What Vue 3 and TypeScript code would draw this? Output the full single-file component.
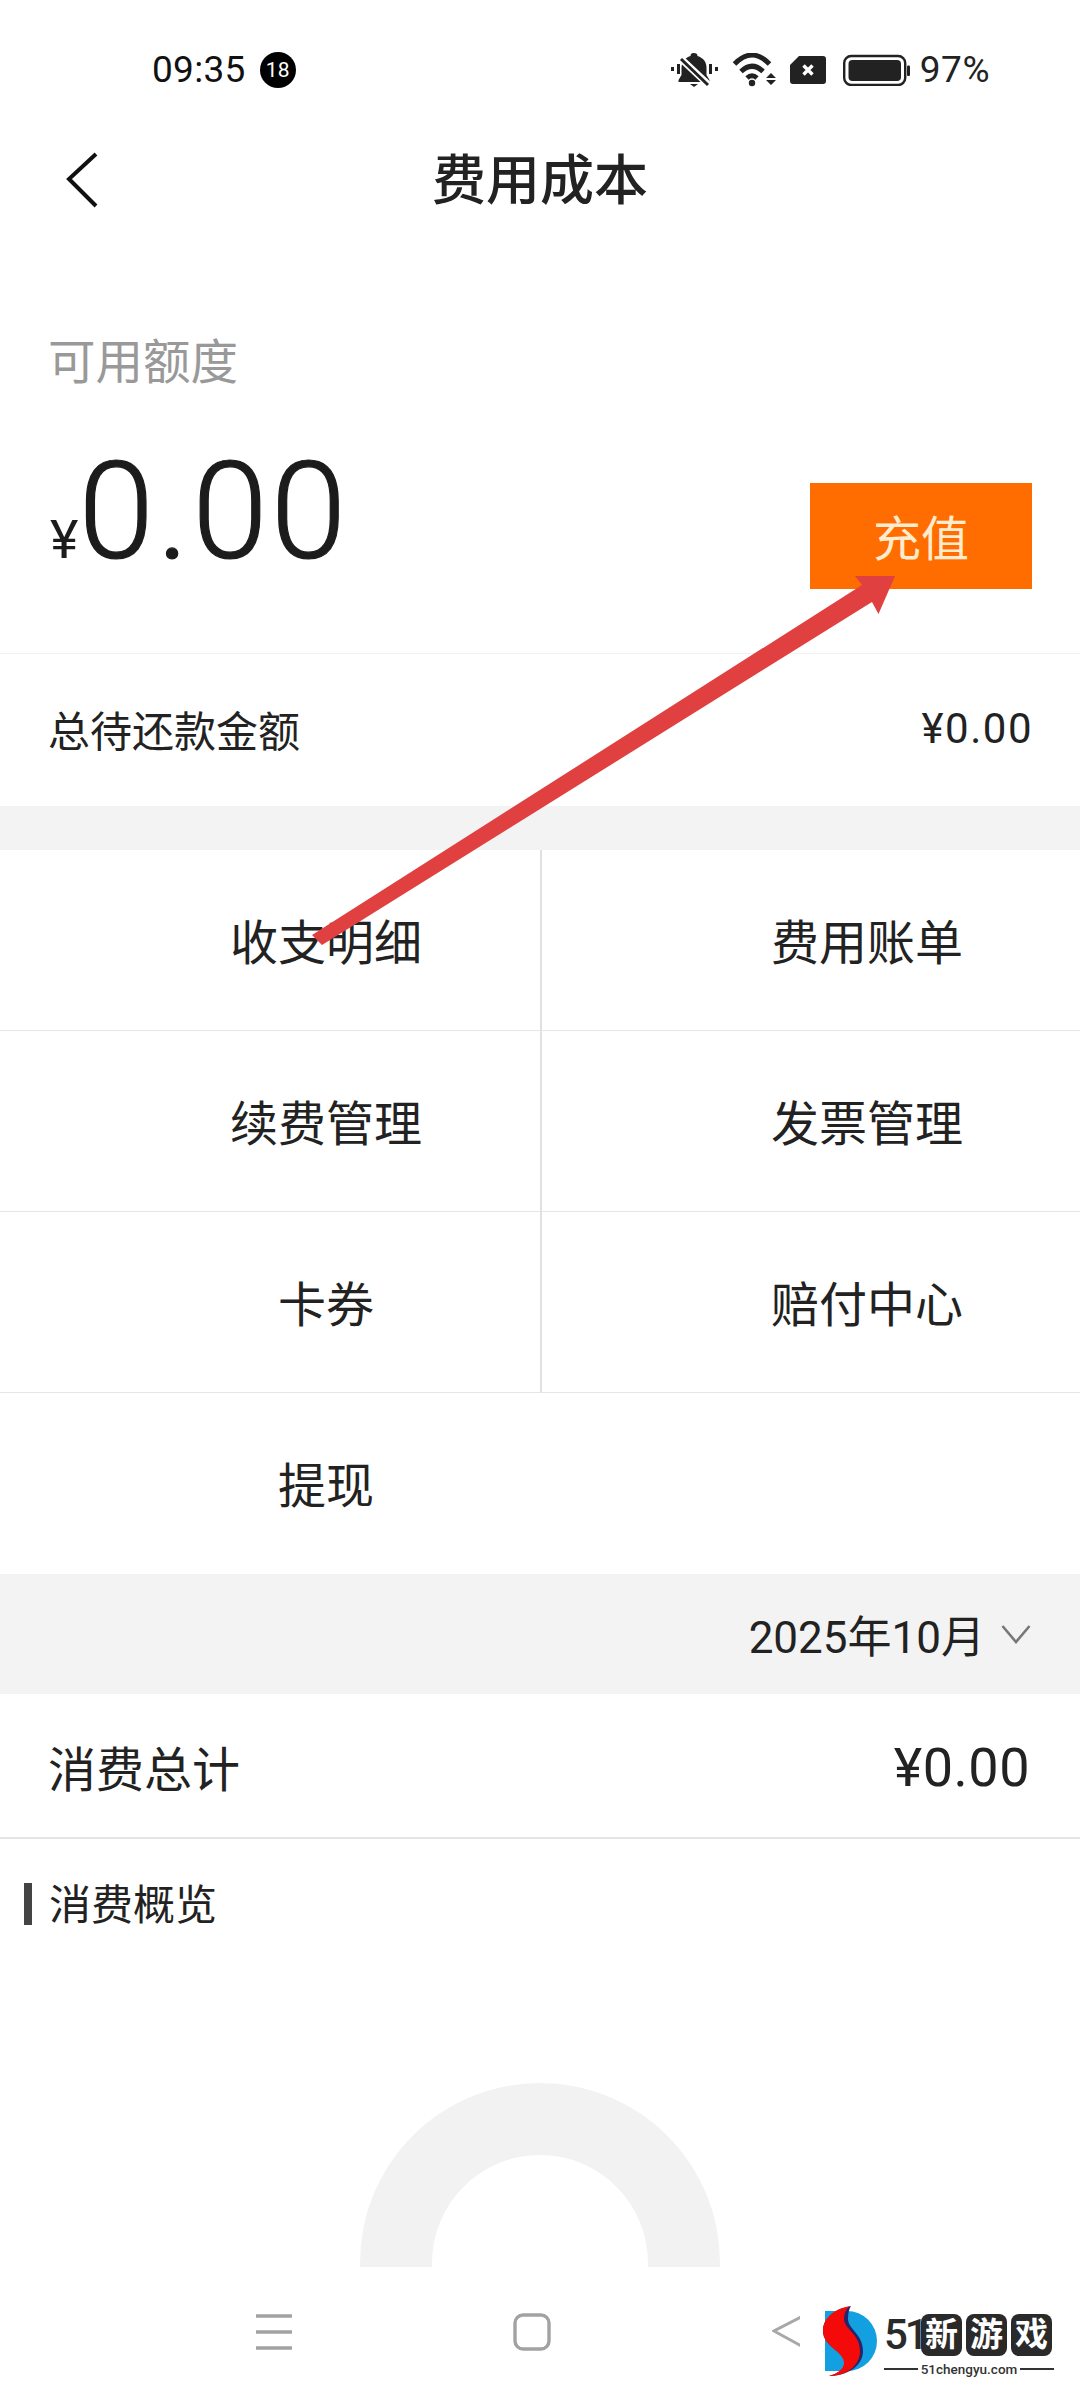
<template>
  <div class="page">
    <div class="status">
      <span class="time">09:35</span>
      <span class="badge">18</span>
      <div class="status-icons">
        <svg class="bell" width="48" height="34" viewBox="672 52 48 34">
          <path d="M695.5 52c-2 0-3 1-3 3-6 2-9 6-9 12v7l-3 5v2h31v-2l-3-5v-7c0-6-3-10-9-12 0-2-1-3-4-3z" fill="#222" />
          <path d="M692 83h8l-4 3z" fill="#222" />
          <path d="M680 55l33 31" stroke="#fff" stroke-width="7" fill="none" />
          <path d="M683 58l27 26" stroke="#222" stroke-width="3" fill="none" />
          <path d="M673 66h3v4h-3zM679 63h3v10h-3zM711 63h3v10h-3zM717 66h3v4h-3z" fill="#222" />
        </svg>
        <svg class="wifi" width="44" height="34" viewBox="734 52 44 34">
          <path d="M736.5 63Q754 45 771.5 63M743 70.5Q754 60 765 70.5M749 77Q754 72.5 759 77" stroke="#222" stroke-width="5" fill="none" />
          <circle cx="754" cy="82" r="3.2" fill="#222" />
          <path d="M773 72l5 5h-10zM768 79h10l-5 5z" fill="#222" />
        </svg>
        <svg class="sim" width="36" height="28" viewBox="792 54 36 28">
          <path d="M801 54h24a3 3 0 0 1 3 3v22a3 3 0 0 1-3 3h-30a3 3 0 0 1-3-3V63z" fill="#222" />
          <path d="M805.5 63.500l9 9m0-9l-9 9" stroke="#fff" stroke-width="3.4" />
        </svg>
        <svg class="battery" width="68" height="32" viewBox="845 52 68 32">
          <rect x="846.200" y="54" width="61" height="29" rx="7" fill="none" stroke="#222" stroke-width="2.400" />
          <rect x="850.500" y="58" width="52.500" height="21" rx="4" fill="#222" />
          <rect x="909" y="63.500" width="3" height="10.500" rx="1" fill="#222" />
        </svg>
        <span class="pct">97%</span>
      </div>
    </div>

    <div class="nav">
      <svg class="back" width="34" height="58" viewBox="0 0 34 58">
        <path d="M31 3L4 28l27 27" fill="none" stroke="#111" stroke-width="4" />
      </svg>
      <span class="title">费用成本</span>
    </div>

    <div class="summary">
      <div class="label">可用额度</div>
      <div class="amount-row">
        <div class="amount"><span class="yen">¥</span>0.00</div>
        <div class="recharge">充值</div>
      </div>
    </div>

    <div class="pending">
      <span>总待还款金额</span>
      <span class="num">¥0.00</span>
    </div>

    <div class="gap"></div>

    <div class="menu">
      <div v-for="item in menu" :key="item" class="cell">{{ item }}</div>
    </div>

    <div class="month">
      <span>2025年10月</span>
      <svg width="30" height="20" viewBox="0 0 30 20">
        <path d="M1.500 2L15 18 28.500 2" fill="none" stroke="#777" stroke-width="2.600" />
      </svg>
    </div>

    <div class="total">
      <span>消费总计</span>
      <span class="num">¥0.00</span>
    </div>

    <div class="section-title">消费概览</div>

    <div class="chart">
      <svg width="360" height="184" viewBox="360 2083 360 184">
        <path
          d="M360 2267v-4a180 180 0 0 1 360 0v4h-72v-4a108 108 0 0 0-216 0v4z"
          fill="#f2f2f2"
        />
      </svg>
    </div>

    <div class="sysnav">
      <svg width="36" height="36" viewBox="0 0 36 36">
        <path d="M0 2h36M0 18h36M0 34h36" stroke="#a2a2a2" stroke-width="3.400" />
      </svg>
      <svg width="38" height="38" viewBox="0 0 38 38">
        <rect x="2" y="2" width="34" height="34" rx="8" fill="none" stroke="#a2a2a2" stroke-width="3.400" />
      </svg>
      <svg width="34" height="36" viewBox="0 0 34 36">
        <path d="M33 1L2 17l31 17" fill="none" stroke="#a8a8a8" stroke-width="3" />
      </svg>
    </div>

    <!-- annotation arrow pasted over the screenshot -->
    <svg class="arrow" width="1080" height="2400" viewBox="0 0 1080 2400">
      <path d="M312 935L862 585 855 576H895L878.500 614 872 602 322 945z" fill="#e04040" />
    </svg>

    <!-- watermark -->
    <div class="logo">
      <svg class="logo-mark" width="56" height="74" viewBox="822 2305 56 74">
        <path d="M825 2311h22a30 30 0 0 1 0 60h-22z" fill="#12a0e0" />
        <path d="M851 2306c-16 3-28 12-28 25 0 16 22 20 22 32 0 6-8 11-16 13 18 0 34-10 34-25 0-17-15-22-15-32 0-6 1-10 3-13z" fill="#25256e" />
        <path d="M850 2306c-16 3-27 12-27 25 0 16 21 20 21 32 0 6-7 11-15 13 17 0 31-10 31-25 0-17-16-22-16-32 0-6 2-10 6-13z" fill="#f50a0a" />
      </svg>
      <div class="logo-text">
        <div class="logo-top">
          <span class="logo-num">51</span>
          <span v-for="ch in logoChars" :key="ch" class="logo-char">{{ ch }}</span>
        </div>
        <div class="logo-url">
          <i></i>
          <span>51chengyu.com</span>
          <i></i>
        </div>
      </div>
    </div>
  </div>
</template>

<script setup lang="ts">
const menu: string[] = ["收支明细", "费用账单", "续费管理", "发票管理", "卡券", "赔付中心", "提现"];
const logoChars: string[] = ["新", "游", "戏"];
</script>

<style>
html,
body {
  margin: 0;
  background: #fff;
}
</style>

<style scoped>
.page {
  position: relative;
  width: 1080px;
  height: 2400px;
  overflow: hidden;
  background: #fff;
  color: #222;
  font-family: Roboto, "Noto Sans CJK SC", sans-serif;
  font-weight: 400;
}

.status {
  height: 136px;
  box-sizing: border-box;
  padding: 3px 90px 0 152px;
  display: flex;
  align-items: center;
  color: #111;
}
.time {
  font-size: 37px;
  line-height: 44px;
  letter-spacing: 0.3px;
}
.badge {
  margin-left: 14px;
  width: 36px;
  height: 36px;
  border-radius: 50%;
  background: #000;
  color: #fff;
  font-size: 21px;
  line-height: 36px;
  text-align: center;
}
.status-icons {
  margin-left: auto;
  display: flex;
  align-items: center;
}
.bell {
  margin-right: 14px;
}
.wifi {
  margin-right: 14px;
}
.sim {
  margin-right: 17px;
}
.battery {
  margin-right: 9px;
}
.pct {
  font-size: 37px;
  line-height: 44px;
  letter-spacing: 0.5px;
  color: #222;
}

.nav {
  position: relative;
  height: 88px;
  display: flex;
  align-items: center;
  justify-content: center;
}
.back {
  position: absolute;
  left: 65px;
  top: 15px;
}
.title {
  font-size: 54px;
  line-height: 88px;
  padding-top: 3px;
  font-weight: 500;
}

.summary {
  height: 430px;
  box-sizing: border-box;
  padding: 115px 48px 0 48px;
  border-bottom: 1px solid #f1f1f1;
}
.label {
  font-size: 47.500px;
  line-height: 48px;
  color: #999;
}
.amount-row {
  margin-top: 57px;
  display: flex;
  justify-content: space-between;
  align-items: flex-start;
}
.amount {
  font-size: 136px;
  line-height: 136px;
  font-weight: 300;
  letter-spacing: 3px;
  -webkit-text-stroke: 1.2px #1c1c1c;
  color: #1c1c1c;
}
.yen {
  font-size: 54px;
  font-weight: 400;
  letter-spacing: 0;
  -webkit-text-stroke: 0;
  margin-left: 2px;
}
.recharge {
  margin-top: 39px;
  width: 222px;
  height: 106px;
  box-sizing: border-box;
  padding-top: 4px;
  background: #ff6d00;
  color: #ffeccf;
  font-size: 48px;
  line-height: 106px;
  text-align: center;
}

.pending {
  height: 152px;
  box-sizing: border-box;
  padding: 0 48px 3px 48px;
  display: flex;
  justify-content: space-between;
  align-items: center;
  font-size: 42px;
}
.pending .num {
  letter-spacing: 1.500px;
  margin-right: -1px;
}
.gap {
  height: 44px;
  background: #f3f3f3;
}

.menu {
  display: grid;
  grid-template-columns: 540px 540px;
  grid-auto-rows: 181px;
  height: 724px;
}
.cell {
  box-sizing: border-box;
  padding: 0 0 3px 112px;
  display: flex;
  align-items: center;
  justify-content: center;
  font-size: 48px;
}
.cell:nth-child(-n + 6) {
  border-bottom: 1px solid #e6e6e6;
}
.cell:nth-child(even) {
  border-left: 2px solid #e0e0e0;
}

.month {
  height: 120px;
  box-sizing: border-box;
  padding-right: 49px;
  background: #f3f3f3;
  display: flex;
  justify-content: flex-end;
  align-items: center;
  gap: 16px;
  font-size: 44px;
  color: #222;
}

.total {
  height: 145px;
  box-sizing: border-box;
  padding: 0 50px 0 48px;
  border-bottom: 2px solid #e5e5e5;
  display: flex;
  justify-content: space-between;
  align-items: center;
  font-size: 48px;
}
.total .num {
  font-size: 54px;
  padding-top: 4px;
  letter-spacing: 0.5px;
}

.section-title {
  margin: 44px 0 0 24px;
  height: 42px;
  box-sizing: border-box;
  border-left: 8px solid #444;
  padding-left: 17px;
  font-size: 42px;
  line-height: 46px;
}

.chart {
  height: 341px;
  box-sizing: border-box;
  padding-top: 158px;
  display: flex;
  justify-content: center;
}

.sysnav {
  height: 132px;
  box-sizing: border-box;
  padding-left: 256px;
  display: flex;
  align-items: center;
  gap: 221px;
}

.arrow {
  position: absolute;
  left: 0;
  top: 0;
  pointer-events: none;
}

.logo {
  position: absolute;
  left: 800px;
  top: 2296px;
  width: 280px;
  height: 90px;
  box-sizing: border-box;
  background: #fff;
  padding: 9px 0 0 22px;
  display: flex;
  gap: 6px;
}
.logo-text {
  padding-top: 9px;
}
.logo-top {
  display: flex;
  align-items: center;
  gap: 4px;
}
.logo-num {
  width: 33px;
  font-size: 42px;
  line-height: 42px;
  font-weight: 500;
  letter-spacing: -3px;
  color: #2a2a2a;
}
.logo-char {
  width: 41px;
  height: 42px;
  border-radius: 8px;
  background: #2a2a2a;
  color: #fff;
  font-size: 33px;
  line-height: 42px;
  font-weight: 700;
  text-align: center;
}
.logo-url {
  margin-top: 4px;
  width: 170px;
  display: flex;
  align-items: center;
  gap: 3px;
  font-size: 13.500px;
  line-height: 18px;
  font-weight: 500;
  color: #333;
}
.logo-url i {
  flex: 1;
  height: 2px;
  background: #333;
}
</style>
